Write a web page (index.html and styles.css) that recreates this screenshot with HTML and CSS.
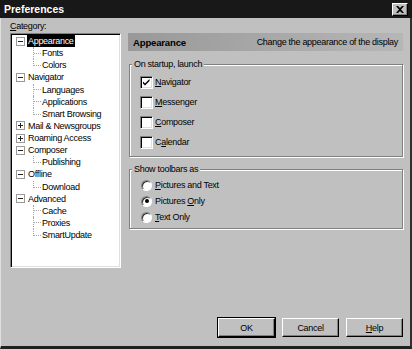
FILE: index.html
```html
<!DOCTYPE html>
<html lang="en">
<head>
  <meta charset="UTF-8" />
  <title>Preferences</title>
  <link rel="stylesheet" href="styles.css">
</head>
<body>

  <div class="window">
    <div class="titlebar">
      <span class="title">Preferences</span>
      <span class="close-btn">
        <svg width="8" height="7" viewBox="0 0 8 7"><path d="M0 0h2l2 2 2-2h2L5 3.5 8 7H6L4 5 2 7H0l3-3.5z" fill="#000"/></svg>
      </span>
    </div>

    <div class="frame">
      <div class="panes">
        <div class="left">
          <div class="cat-label"><u>C</u>ategory:</div>
          <div class="tree">
            <div class="node"><span class="toggle open"></span><span class="label selected">Appearance</span></div>
            <div class="leaf"><span class="branch"></span>Fonts</div>
            <div class="leaf last"><span class="branch"></span>Colors</div>
            <div class="node"><span class="toggle open"></span><span class="label">Navigator</span></div>
            <div class="leaf"><span class="branch"></span>Languages</div>
            <div class="leaf"><span class="branch"></span>Applications</div>
            <div class="leaf last"><span class="branch"></span>Smart Browsing</div>
            <div class="node"><span class="toggle"></span><span class="label">Mail &amp; Newsgroups</span></div>
            <div class="node"><span class="toggle"></span><span class="label">Roaming Access</span></div>
            <div class="node"><span class="toggle open"></span><span class="label">Composer</span></div>
            <div class="leaf last"><span class="branch"></span>Publishing</div>
            <div class="node"><span class="toggle open"></span><span class="label">Offline</span></div>
            <div class="leaf last"><span class="branch"></span>Download</div>
            <div class="node"><span class="toggle open"></span><span class="label">Advanced</span></div>
            <div class="leaf"><span class="branch"></span>Cache</div>
            <div class="leaf"><span class="branch"></span>Proxies</div>
            <div class="leaf last"><span class="branch"></span>SmartUpdate</div>
          </div>
        </div>

        <div class="right">
          <div class="pane-header">
            <span class="pane-title">Appearance</span>
            <span class="pane-desc">Change the appearance of the display</span>
          </div>

          <fieldset class="group startup">
            <legend>On startup, launch</legend>
            <div class="row"><span class="checkbox checked">
              <svg width="9" height="9" viewBox="0 0 9 9"><path d="M1 3.5l2 2 4.5-4.5v2L3 7.5 1 5.5z" fill="#000"/></svg>
            </span><span><u>N</u>avigator</span></div>
            <div class="row"><span class="checkbox"></span><span><u>M</u>essenger</span></div>
            <div class="row"><span class="checkbox"></span><span><u>C</u>omposer</span></div>
            <div class="row"><span class="checkbox"></span><span>C<u>a</u>lendar</span></div>
          </fieldset>

          <fieldset class="group toolbars">
            <legend>Show toolbars as</legend>
            <div class="row"><span class="radio"></span><span><u>P</u>ictures and Text</span></div>
            <div class="row"><span class="radio checked"></span><span>Pictures <u>O</u>nly</span></div>
            <div class="row"><span class="radio"></span><span><u>T</u>ext Only</span></div>
          </fieldset>
        </div>
      </div>

      <div class="buttons">
        <button class="default">OK</button>
        <button>Cancel</button>
        <button><u>H</u>elp</button>
      </div>
    </div>
  </div>

</body>
</html>
```

FILE: styles.css
```css
body {
  margin: 0;
  font-family: "Liberation Sans", Arial, sans-serif;
  font-size: 9px;
  letter-spacing: -0.3px;
  color: #000;
  background: #c0c0c0;
}

.window {
  width: 412px;
  height: 349px;
  display: flex;
  flex-direction: column;
  background: #c0c0c0;
}

.titlebar {
  height: 18px;
  flex-shrink: 0;
  background: #181818;
  color: #fff;
  display: flex;
  align-items: center;
  justify-content: space-between;
  padding: 0 4px 0 4px;
}

.title {
  font-weight: bold;
  font-size: 10.5px;
  letter-spacing: 0;
}

.close-btn {
  width: 16px;
  height: 13px;
  box-sizing: border-box;
  background: #c0c0c0;
  border: 1px solid;
  border-color: #fff #000 #000 #fff;
  box-shadow: inset -1px -1px #808080;
  display: flex;
  align-items: center;
  justify-content: center;
}

.frame {
  flex: 1;
  display: flex;
  flex-direction: column;
  padding: 1px 7px 9px 9px;
  border-left: 1px solid #dfdfdf;
  border-right: 2px solid #303030;
  border-bottom: 3px solid #202020;
}

.panes {
  display: flex;
  gap: 7px;
}

.left {
  width: 111px;
  flex-shrink: 0;
}

.cat-label {
  height: 14px;
  line-height: 14px;
}

.tree {
  height: 235px;
  box-sizing: border-box;
  background: #fff;
  border: 1px solid;
  border-color: #808080 #fff #fff #808080;
  box-shadow: inset 1px 1px #000, inset -1px -1px #dfdfdf;
  padding-top: 1px;
  overflow: hidden;
}

.node,
.leaf {
  height: 12.125px;
  display: flex;
  align-items: center;
  white-space: nowrap;
}

.node {
  padding-left: 5px;
}

.leaf {
  padding-left: 22px;
}

.toggle {
  width: 9px;
  height: 9px;
  box-sizing: border-box;
  border: 1px solid #999;
  background: #fff;
  margin-right: 2px;
  display: flex;
  align-items: center;
  justify-content: center;
  position: relative;
}

.toggle::before {
  content: "";
  width: 5px;
  height: 1px;
  background: #222;
}

.toggle:not(.open)::after {
  content: "";
  position: absolute;
  left: 3px;
  top: 1px;
  width: 1px;
  height: 5px;
  background: #222;
}

.label {
  padding: 0 1px;
  line-height: 12px;
}

.label.selected {
  background: #000;
  color: #fff;
}

.branch {
  align-self: stretch;
  width: 8px;
  margin-right: 1px;
  box-sizing: border-box;
  border-left: 1px dotted #a8a8a8;
  display: flex;
  align-items: center;
}

.leaf.last .branch {
  align-self: flex-start;
  height: 7px;
  align-items: flex-end;
}

.branch::after {
  content: "";
  width: 7px;
  border-top: 1px dotted #a8a8a8;
}

.right {
  flex: 1;
  margin-top: 14px;
}

.pane-header {
  height: 18px;
  display: flex;
  align-items: center;
  justify-content: space-between;
  padding: 0 5px;
  background: linear-gradient(to right, #999, #b6b6b6);
}

.pane-title {
  font-weight: bold;
  font-size: 9.6px;
  letter-spacing: -0.2px;
}

.group {
  margin: 0 0 0 1px;
  padding: 2px 0 4px 10px;
  border: 1px solid #808080;
  box-shadow: 1px 1px 0 #fff, inset 1px 1px 0 #fff;
  min-width: 0;
}

.group legend {
  padding: 0 2px;
  margin-left: -8px;
  background: #c0c0c0;
  line-height: 11px;
}

.startup {
  margin-top: 8px;
}

.toolbars {
  margin-top: 7px;
  padding-bottom: 3px;
}

.row {
  display: flex;
  align-items: center;
  gap: 2px;
}

.startup .row {
  height: 20px;
}

.toolbars .row {
  height: 16px;
}

.checkbox {
  width: 13px;
  height: 13px;
  box-sizing: border-box;
  background: #fff;
  border: 1px solid;
  border-color: #808080 #fff #fff #808080;
  box-shadow: inset 1px 1px #000, inset -1px -1px #dfdfdf;
  display: flex;
  align-items: center;
  justify-content: center;
}

.radio {
  width: 11px;
  height: 11px;
  box-sizing: border-box;
  margin: 0 1px 0 1px;
  border-radius: 50%;
  background: #fff;
  border: 1px solid;
  border-color: #808080 #fff #fff #808080;
  box-shadow: inset 1px 1px #303030;
  display: flex;
  align-items: center;
  justify-content: center;
}

.radio.checked::after {
  content: "";
  width: 4px;
  height: 4px;
  border-radius: 50%;
  background: #000;
}

.buttons {
  margin-top: auto;
  display: flex;
  justify-content: flex-end;
  gap: 7px;
}

button {
  width: 57px;
  height: 19px;
  padding: 0;
  font-family: inherit;
  font-size: 9px;
  letter-spacing: -0.3px;
  color: #000;
  background: #c0c0c0;
  border: 1px solid;
  border-color: #fff #000 #000 #fff;
  box-shadow: inset -1px -1px #808080;
}

button.default {
  outline: 1px solid #000;
}
```
